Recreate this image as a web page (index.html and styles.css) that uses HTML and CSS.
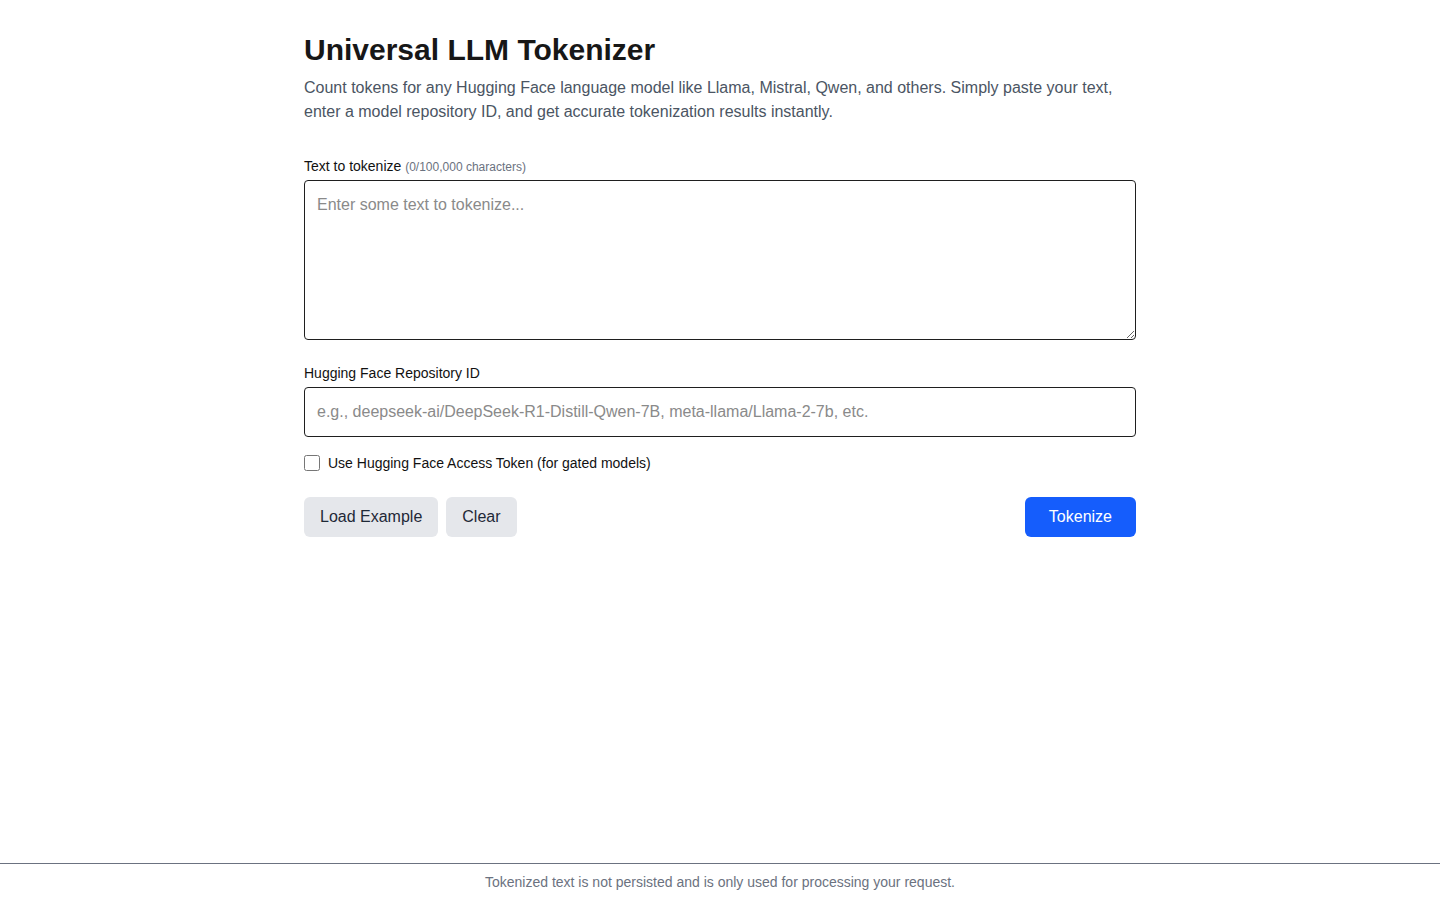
FILE: index.html
```html
<!DOCTYPE html>
<html lang="en">
<head>
    <meta charset="UTF-8">
    <meta name="viewport" content="width=device-width, initial-scale=1.0">
    <title>Universal LLM Tokenizer</title>
    <link rel="stylesheet" href="styles.css">
</head>
<body>
    <main class="container">
        <h1>Universal LLM Tokenizer</h1>
        <p class="intro">Count tokens for any Hugging Face language model like Llama, Mistral, Qwen, and others. Simply paste your text, enter a model repository ID, and get accurate tokenization results instantly.</p>

        <div class="field first">
            <label for="text">Text to tokenize <span class="count">(0/100,000 characters)</span></label>
            <textarea id="text" placeholder="Enter some text to tokenize..."></textarea>
        </div>

        <div class="field">
            <label for="repo">Hugging Face Repository ID</label>
            <input type="text" id="repo" placeholder="e.g., deepseek-ai/DeepSeek-R1-Distill-Qwen-7B, meta-llama/Llama-2-7b, etc.">
        </div>

        <label class="check-row">
            <input type="checkbox">
            <span>Use Hugging Face Access Token (for gated models)</span>
        </label>

        <div class="actions">
            <div class="left-actions">
                <button class="btn secondary">Load Example</button>
                <button class="btn secondary">Clear</button>
            </div>
            <button class="btn primary">Tokenize</button>
        </div>
    </main>

    <footer class="footer">Tokenized text is not persisted and is only used for processing your request.</footer>
</body>
</html>
```

FILE: styles.css
```css
body {
    margin: 0;
    font-family: "Liberation Sans", Arial, sans-serif;
    color: #111827;
    background: #ffffff;
}
.container {
    max-width: 832px;
    margin: 0 auto;
    padding-top: 32px;
}
h1 {
    margin: 0;
    font-size: 30px;
    line-height: 36px;
    font-weight: 700;
    color: #171717;
}
.intro {
    margin: 8px 0 0;
    font-size: 16px;
    line-height: 24px;
    color: #4b5563;
}
.field {
    display: flex;
    flex-direction: column;
    gap: 4px;
    margin-top: 23px;
}
.field.first {
    margin-top: 32px;
    gap: 3px;
}
.field label {
    font-size: 14px;
    line-height: 20px;
    color: #111111;
}
.count {
    font-size: 12px;
    color: #6b7280;
}
textarea, input[type="text"] {
    box-sizing: border-box;
    width: 100%;
    border: 1px solid #1f1f1f;
    border-radius: 4px;
    padding: 12px;
    font-family: inherit;
    font-size: 16px;
    line-height: 24px;
    color: #111827;
    outline: none;
}
textarea {
    height: 160px;
    resize: vertical;
    display: block;
}
input[type="text"] {
    height: 50px;
}
::placeholder {
    color: #8a8a8a;
}
.check-row {
    display: flex;
    align-items: center;
    gap: 8px;
    margin-top: 14px;
    height: 24px;
    font-size: 14px;
    color: #111111;
}
.check-row input {
    width: 16px;
    height: 16px;
    margin: 0;
}
.actions {
    display: flex;
    justify-content: space-between;
    margin-top: 22px;
}
.left-actions {
    display: flex;
    gap: 8px;
}
.btn {
    height: 40px;
    padding: 0 16px;
    border: none;
    border-radius: 6px;
    font-family: inherit;
    font-size: 16px;
    cursor: pointer;
}
.secondary {
    background: #e5e7eb;
    color: #1f2937;
}
.primary {
    background: #155dfc;
    color: #ffffff;
    padding: 0 24px;
}
.footer {
    position: fixed;
    left: 0;
    right: 0;
    bottom: 0;
    border-top: 1px solid #6b7280;
    padding: 8px 0;
    font-size: 14px;
    line-height: 20px;
    text-align: center;
    color: #6b7280;
    background: #ffffff;
}
```
